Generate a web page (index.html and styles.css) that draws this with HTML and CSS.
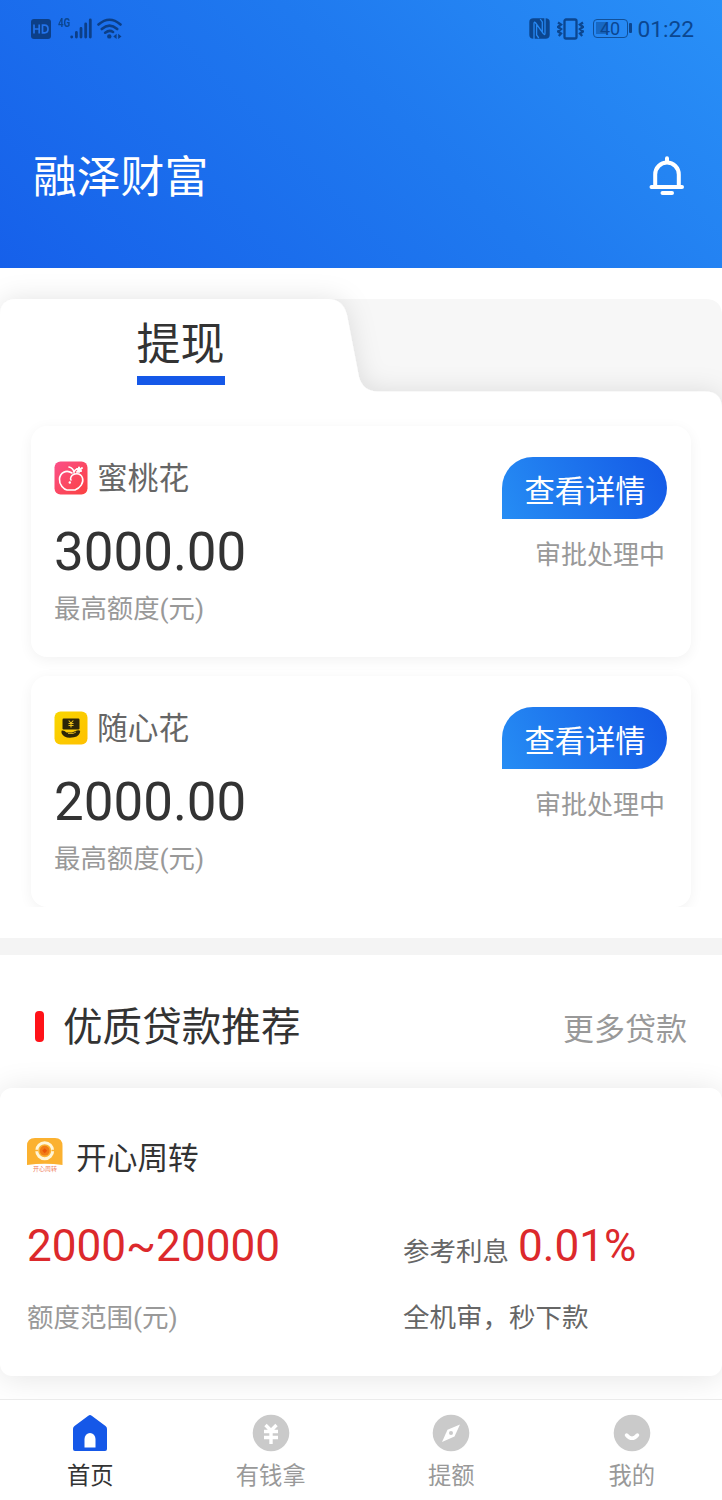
FILE: index.html
```html
<!DOCTYPE html>
<html lang="zh-CN">
<head>
<meta charset="utf-8">
<title>融泽财富</title>
<link rel="stylesheet" href="styles.css">
</head>
<body>
<div class="app">
  <header class="header">
    <div class="status">
      <div class="status-left">
        <svg class="hd" width="20" height="20" viewBox="0 0 20 20"><rect width="20" height="20" rx="3" fill="#0c3f88"/><path d="M3 5.500V14.500M8.200 5.500V14.500M3 10H8.200M11.500 6.200V13.800H13.500Q17 13.800 17 10Q17 6.200 13.500 6.200Z" fill="none" stroke="#2373ea" stroke-width="1.700"/></svg>
        <span class="net">4G</span>
        <svg class="signal" width="22" height="21" viewBox="0 0 22 21" fill="none" stroke="#0c3f88" stroke-width="2.800" stroke-linecap="round"><path d="M1.700 19V18.800M6.400 19V14.500M11 19V10.500M15.700 19V6M20.300 19V2"/></svg>
        <svg class="wifi" width="26" height="21" viewBox="0 0 26 21" fill="none" stroke="#0c3f88" stroke-width="2.600" stroke-linecap="round"><path d="M1.500 6.500Q12.500-3 23.500 6.500M4.800 11Q12.500 4.300 20.200 11M8.200 14.700Q12.500 11.500 16 14"/><circle cx="12.300" cy="18.400" r="2.200" fill="#0c3f88" stroke="none"/><path d="M16.300 18.500L19.600 15.800V21ZM24.500 18.500L21.200 15.800V21Z" fill="#0c3f88" stroke="none"/></svg>
      </div>
      <div class="status-right">
        <svg width="21" height="21" viewBox="0 0 21 21"><path d="M4.500 .3H16.500Q20.700 .3 20.700 4V17Q20.700 20.700 16.500 20.700H4.500Q.3 20.700 .3 17V4Q.3 .3 4.500 .3Z" fill="#0b4690"/><path d="M5 21V5.500Q5 3 6.700 5L14.300 15.500Q16 18 16 15V0M7.600 7V17L9.800 20M13.300 14V4L11.200 1" fill="none" stroke="#2788f2" stroke-width="1.300"/></svg>
        <svg class="vibrate" width="27" height="22" viewBox="0 0 27 22" fill="none" stroke="#0b4690" stroke-width="2.300"><rect x="7.500" y="1.500" width="12" height="19" rx="1.500"/><path d="M1 4.500L4 6.500L1 9L4 11L1 13.500L4 15.500L1.800 18M26 4.500L23 6.500L26 9L23 11L26 13.500L23 15.500L25.200 18"/></svg>
        <div class="battery"><span>40</span></div>
        <span class="clock">01:22</span>
      </div>
    </div>
    <div class="titlebar">
      <h1>融泽财富</h1>
      <svg width="36" height="40" viewBox="0 0 36 40" fill="none" stroke="#fff" stroke-width="4" stroke-linecap="round"><path d="M6.200 31V18.500A11.800 12 0 0 1 29.800 18.500V31M18 6V2.300M2.500 31H33M13.500 37H23"/></svg>
    </div>
  </header>

  <section class="offers">
    <div class="tabs">
      <svg class="tab-shape" width="722" height="141" viewBox="0 268 722 141">
        <defs><filter id="soft" x="-40" y="240" width="802" height="250" filterUnits="userSpaceOnUse"><feDropShadow dx="0" dy="0" stdDeviation="13" flood-color="#000" flood-opacity=".11"/></filter></defs>
        <path d="M300 299H705Q722 299 722 316V420H300Z" fill="#f7f7f7"/>
        <path d="M0 316Q0 299 17 299H328Q343 299 347 315L359 377Q363 391.500 378 391.500H705Q722 391.500 722 409V460H0Z" fill="#fff" filter="url(#soft)"/>
      </svg>
      <div class="tab-label"><span>提现</span></div>
    </div>
    <div class="offer-list">
      <article class="offer">
        <div>
          <div class="brand">
            <svg width="34" height="34" viewBox="0 0 34 34"><defs><linearGradient id="peach" x2="1" y2="1"><stop stop-color="#fb5089"/><stop offset="1" stop-color="#fb4140"/></linearGradient></defs><rect x=".5" y=".5" width="33" height="33" rx="6" fill="url(#peach)"/><g fill="none" stroke="#fff" stroke-width="1.600" stroke-linecap="round"><path d="M18 12C12 8 6 12 5.500 18C5 24 10 28.500 13 29H21C26 27 30 22 28.500 17C26.500 11 19 12 17 16Q16 18 17 19M15 6Q19 7 20 11Q21 8 24 8"/><path d="M23 11L28 7M23 8L27 10M25 6.500V11" stroke-width="2"/></g><circle cx="15.800" cy="21.500" r="1.200" fill="#fff"/></svg>
            <span>蜜桃花</span>
          </div>
          <div class="amount">3000.00</div>
          <div class="caption">最高额度(元)</div>
        </div>
        <div class="action"><a class="detail">查看详情</a><span class="state">审批处理中</span></div>
      </article>
      <article class="offer">
        <div>
          <div class="brand">
            <svg width="34" height="34" viewBox="0 0 34 34"><defs><linearGradient id="gold" x2="1" y2="1"><stop stop-color="#f8d600"/><stop offset="1" stop-color="#ffc000"/></linearGradient></defs><rect x=".5" y=".5" width="33" height="33" rx="6" fill="url(#gold)"/><rect x="8.500" y="7.500" width="17" height="11" rx="1.200" fill="#2c2508"/><path d="M14.700 9.500L17 12L19.300 9.500M14.500 12.500H19.500M14.500 14.500H19.500M17 12V16.500" fill="none" stroke="#edc11e" stroke-width="1.100"/><path d="M7.500 19.700Q10 19 12.500 21.500H18L21 20.200Q25 18.500 26.200 20Q26 25 20 26.300Q10 28 7.500 22Z" fill="#2c2508"/><path d="M14 22.500H19L22 21" fill="none" stroke="#edc11e" stroke-width=".8"/></svg>
            <span>随心花</span>
          </div>
          <div class="amount">2000.00</div>
          <div class="caption">最高额度(元)</div>
        </div>
        <div class="action"><a class="detail">查看详情</a><span class="state">审批处理中</span></div>
      </article>
    </div>
  </section>

  <section class="recommend">
    <div class="section-head"><h2>优质贷款推荐</h2><a>更多贷款</a></div>
    <article class="loan">
      <div class="loan-brand">
        <div class="loan-logo">
          <svg width="36" height="27" viewBox="0 0 36 27"><path d="M0 8Q0 0 8 0H28Q35.500 0 35.500 8V27Q18 24.500 0 27Z" fill="#fbb130"/><circle cx="17.700" cy="12.700" r="8" fill="none" stroke="#fff6d8" stroke-width="3"/><path d="M8 12.500H11M24.500 12.500H28" stroke="#fbb130" stroke-width="1.500"/><circle cx="17.700" cy="12.700" r="4.900" fill="#f17c17"/><rect x="16" y="11" width="3.500" height="3.500" fill="#e95708" transform="rotate(45 17.700 12.700)"/></svg>
          <span>开心周转</span>
        </div>
        <h3>开心周转</h3>
      </div>
      <div class="loan-grid">
        <div class="red">2000~20000</div>
        <div class="rate"><span>参考利息</span><b class="red">0.01%</b></div>
        <div class="range">额度范围(元)</div>
        <div class="note">全机审，秒下款</div>
      </div>
    </article>
  </section>

  <nav class="nav">
    <a class="active"><svg width="38" height="38" viewBox="0 0 38 38"><path d="M2 15Q2 13 3.500 12L17.300 1.700Q19 .4 20.700 1.700L34.500 12Q36 13 36 15V35Q36 37 34 37H4Q2 37 2 35Z" fill="#1558e8"/><path d="M13.500 33.500V25A5.500 6 0 0 1 24.500 25V33.500Z" fill="#fff"/></svg><span>首页</span></a>
    <a><svg width="38" height="38" viewBox="0 0 38 38"><circle cx="19" cy="19" r="18.300" fill="#cacaca"/><path d="M13.500 11L19 16.500L24.500 11M12 17.500H26M12 23.500H26M19 16.500V30" fill="none" stroke="#fff" stroke-width="3.400"/></svg><span>有钱拿</span></a>
    <a><svg width="38" height="38" viewBox="0 0 38 38"><circle cx="19" cy="19" r="18.300" fill="#cacaca"/><path d="M28 10.500L22.500 22.500L10 28L15.500 15.800Z" fill="#fff"/><circle cx="19" cy="19" r="2" fill="#cacaca"/></svg><span>提额</span></a>
    <a><svg width="38" height="38" viewBox="0 0 38 38"><circle cx="19" cy="19" r="18.300" fill="#cacaca"/><path d="M13.500 21Q19 27.500 24.500 21" fill="none" stroke="#fff" stroke-width="3.500" stroke-linecap="round"/></svg><span>我的</span></a>
  </nav>
</div>
</body>
</html>
```
FILE: styles.css
```css
* { box-sizing: border-box; margin: 0; padding: 0; }
body { font-family: Roboto, "Noto Sans CJK SC", sans-serif; background: #fff; color: #333; }
svg { display: block; flex: none; }
h1, h2, h3, b { font-weight: 400; }
.app { width: 722px; height: 1500px; overflow: hidden; display: flex; flex-direction: column; }

.header { height: 268px; flex: none; background: linear-gradient(45deg, #1660ea 0%, #1f79ef 55%, #2990f7 100%); }
.status { height: 58px; display: flex; justify-content: space-between; padding: 0 28px 0 31px; color: #0b4690; }
.status-left, .status-right { display: flex; align-items: center; }
.net { font: 700 13px/14px Roboto, sans-serif; width: 12px; margin: -13px 0 0 7px; transform: scaleX(.75); transform-origin: left; }
.signal { margin-top: -1px; }
.wifi { margin: -1px 0 0 5px; }
.status-right { padding-bottom: 1px; }
.vibrate { margin-left: 7px; }
.battery { position: relative; width: 35px; height: 19px; margin: 0 3px 0 9px; border: 1.500px solid #115099; border-radius: 4px; background: linear-gradient(#1768c4, #1768c4) 2px 2px / 11px 12px no-repeat; font-size: 18px; line-height: 17px; text-align: center; }
.battery::after { content: ""; position: absolute; right: -5px; top: 3px; width: 3px; height: 10px; border-radius: 1px; background: #0b4690; }
.clock { font-size: 22.700px; margin-left: 7px; padding-top: 2px; }
.titlebar { display: flex; justify-content: space-between; align-items: center; height: 236px; padding: 0 37px 0 33px; }
.titlebar h1 { padding-top: 3px; color: #fff; font-size: 43.800px; line-height: 60px; }

.offers { height: 670px; flex: none; }
.tabs { display: grid; height: 141px; }
.tab-shape, .tab-label { grid-area: 1 / 1; }
.tab-label { width: 361px; padding-top: 44px; text-align: center; font-size: 44px; line-height: 66px; }
.tab-label span { display: inline-block; height: 73px; border-bottom: 9px solid #1558e8; }
.offer-list { height: 498px; padding: 17px 31px 0; overflow: hidden; display: flex; flex-direction: column; gap: 19px; }
.offer { height: 231px; flex: none; display: flex; justify-content: space-between; padding: 31px 24px 0 23px; border-radius: 16px; background: #fff; box-shadow: 0 3px 14px rgba(0, 0, 0, .055); }
.brand { display: flex; align-items: center; gap: 9px; height: 42px; color: #666; font-size: 30.700px; line-height: 42px; }
.brand span { padding-top: 2px; }
.amount { height: 60px; margin-top: 23px; font-size: 52.900px; line-height: 60px; }
.caption { margin-top: 9px; font-size: 26.400px; line-height: 36px; color: #999; }
.action { display: flex; flex-direction: column; align-items: flex-end; }
.detail { width: 165px; height: 62px; padding-left: 1px; border-radius: 31px 31px 31px 0; background: linear-gradient(65deg, #268df4, #1459e6); color: #fff; font-size: 30.300px; line-height: 69px; text-align: center; }
.state { margin: 18px 2px 0 0; color: #999; font-size: 26px; line-height: 36px; }

.recommend { height: 461px; flex: none; border-top: 17px solid #f4f4f4; }
.section-head { display: flex; align-items: center; justify-content: space-between; height: 133px; padding: 10px 35px 0; background: #fff; }
.section-head h2 { display: flex; align-items: center; gap: 19px; font-size: 39.600px; line-height: 56px; padding-top: 3px; }
.section-head h2::before { content: ""; width: 9px; height: 31px; margin-top: -4px; border-radius: 4px; background: #ff1218; }
.section-head a { color: #999; font-size: 31px; }
.loan { height: 288px; padding: 45px 27px 0; border-radius: 12px; background: #fff; box-shadow: 0 2px 32px rgba(0, 0, 0, .11); }
.loan-brand { display: flex; gap: 13px; height: 48px; }
.loan-brand h3 { padding-top: 2px; font-size: 30.700px; line-height: 48px; }
.loan-logo { width: 36px; padding-top: 5px; }
.loan-logo span { display: block; color: #ef8060; font-size: 6px; line-height: 7px; text-align: center; white-space: nowrap; }
.loan-grid { display: grid; grid-template-columns: 376px 1fr; grid-template-rows: 60px 36px; row-gap: 24px; margin-top: 35px; font-size: 26.500px; line-height: 36px; }
.red { color: #dc292c; font-size: 44.100px; line-height: 60px; }
.rate { display: flex; align-items: baseline; gap: 9px; }
.rate span { padding-top: 1px; }
.rate span, .note { color: #666; }
.range { color: #999; }

.nav { position: relative; height: 101px; flex: none; display: grid; grid-template-columns: repeat(4, 1fr); border-top: 1px solid #ebebeb; background: #fff; }
.nav a { display: flex; flex-direction: column; align-items: center; padding-top: 14px; color: #999; font-size: 23.300px; line-height: 32px; }
.nav span { margin-top: 8px; }
.nav .active { color: #333; }
```
